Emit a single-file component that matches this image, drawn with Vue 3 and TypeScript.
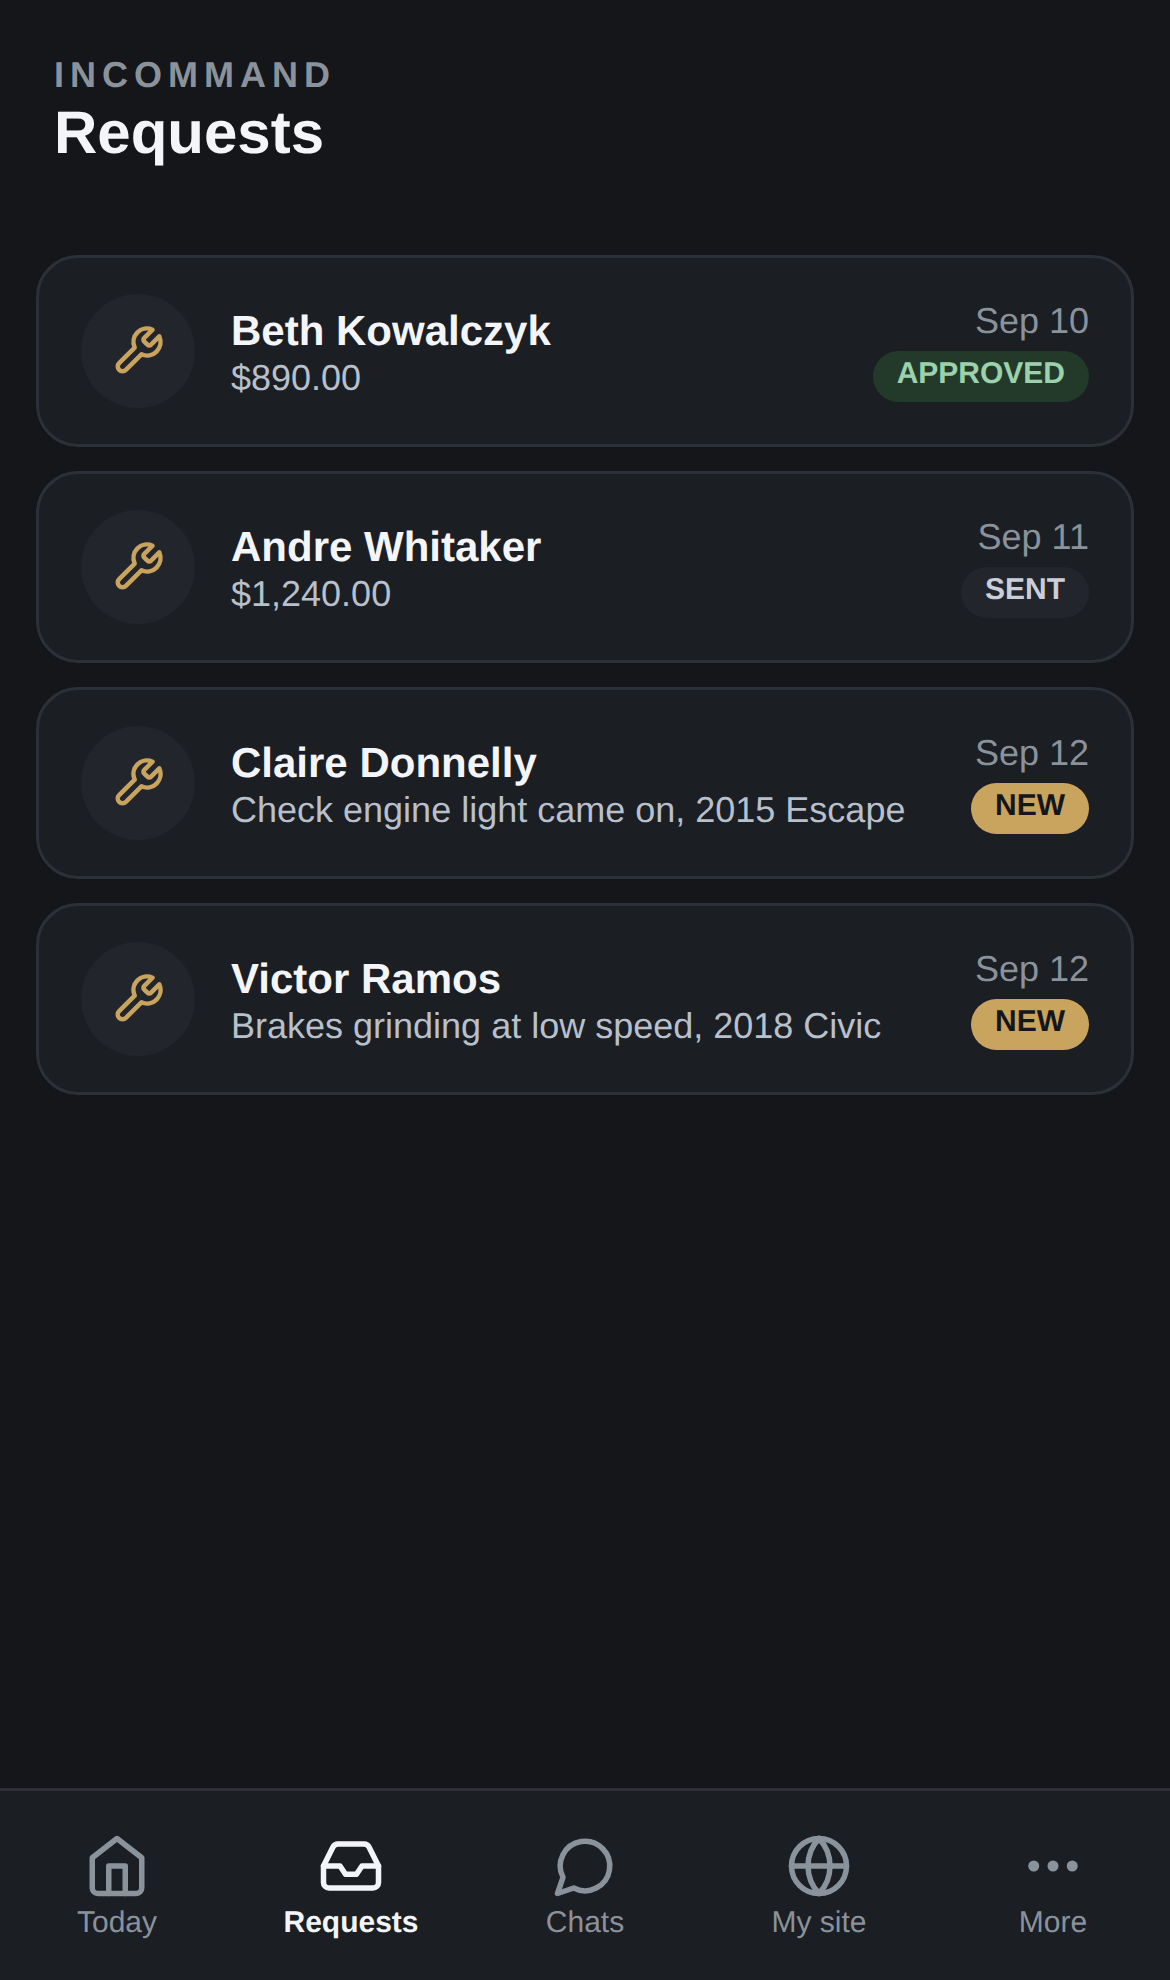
<script setup lang="ts">
interface Req { name: string; sub: string; date: string; status: string; kind: string }
const requests: Req[] = [
  { name: 'Beth Kowalczyk', sub: '$890.00', date: 'Sep 10', status: 'APPROVED', kind: 'approved' },
  { name: 'Andre Whitaker', sub: '$1,240.00', date: 'Sep 11', status: 'SENT', kind: 'sent' },
  { name: 'Claire Donnelly', sub: 'Check engine light came on, 2015 Escape', date: 'Sep 12', status: 'NEW', kind: 'new' },
  { name: 'Victor Ramos', sub: 'Brakes grinding at low speed, 2018 Civic', date: 'Sep 12', status: 'NEW', kind: 'new' },
]
</script>

<template>
  <div class="app">
    <header class="head">
      <div class="eyebrow">INCOMMAND</div>
      <h1 class="title">Requests</h1>
    </header>
    <main class="list">
      <article v-for="r in requests" :key="r.name" class="card">
        <div class="avatar">
          <svg class="wrench" viewBox="0 0 24 24" fill="none" stroke="currentColor" stroke-width="2" stroke-linecap="round" stroke-linejoin="round">
            <path d="M14.7 6.3a1 1 0 0 0 0 1.4l1.6 1.6a1 1 0 0 0 1.4 0l3.77-3.77a6 6 0 0 1-7.94 7.94l-6.91 6.91a2.12 2.12 0 0 1-3-3l6.91-6.91a6 6 0 0 1 7.94-7.94l-3.76 3.76z" />
          </svg>
        </div>
        <div class="body">
          <div class="name">{{ r.name }}</div>
          <div class="sub">{{ r.sub }}</div>
        </div>
        <div class="meta">
          <div class="date">{{ r.date }}</div>
          <span class="pill" :class="r.kind">{{ r.status }}</span>
        </div>
      </article>
    </main>
    <nav class="tabs">
      <div class="tab">
        <svg class="ico" viewBox="0 0 24 24" fill="none" stroke="currentColor" stroke-width="2" stroke-linecap="round" stroke-linejoin="round">
          <path d="m3 9 9-7 9 7v11a2 2 0 0 1-2 2H5a2 2 0 0 1-2-2z" />
          <path d="M9 22V12h6v10" />
        </svg>
        <span>Today</span>
      </div>
      <div class="tab active">
        <svg class="ico" viewBox="0 0 24 24" fill="none" stroke="currentColor" stroke-width="2" stroke-linecap="round" stroke-linejoin="round">
          <polyline points="22 12 16 12 14 15 10 15 8 12 2 12" />
          <path d="M5.45 5.11 2 12v6a2 2 0 0 0 2 2h16a2 2 0 0 0 2-2v-6l-3.45-6.89A2 2 0 0 0 16.76 4H7.24a2 2 0 0 0-1.79 1.11z" />
        </svg>
        <span>Requests</span>
      </div>
      <div class="tab">
        <svg class="ico" viewBox="0 0 24 24" fill="none" stroke="currentColor" stroke-width="2" stroke-linecap="round" stroke-linejoin="round">
          <path d="M7.9 20A9 9 0 1 0 4 16.1L2 22Z" />
        </svg>
        <span>Chats</span>
      </div>
      <div class="tab">
        <svg class="ico" viewBox="0 0 24 24" fill="none" stroke="currentColor" stroke-width="2" stroke-linecap="round" stroke-linejoin="round">
          <circle cx="12" cy="12" r="10" />
          <path d="M12 2a14.5 14.5 0 0 0 0 20 14.5 14.5 0 0 0 0-20" />
          <path d="M2 12h20" />
        </svg>
        <span>My site</span>
      </div>
      <div class="tab">
        <svg class="ico" viewBox="0 0 24 24" fill="none" stroke="currentColor" stroke-width="2" stroke-linecap="round" stroke-linejoin="round">
          <circle cx="12" cy="12" r="1" />
          <circle cx="19" cy="12" r="1" />
          <circle cx="5" cy="12" r="1" />
        </svg>
        <span>More</span>
      </div>
    </nav>
  </div>
</template>

<style scoped>
.app {
  width: 1170px;
  height: 1980px;
  display: flex;
  flex-direction: column;
  background: #14161a;
  font-family: "Liberation Sans", Arial, sans-serif;
  color: #f3f5f8;
  text-rendering: geometricPrecision;
}
.head {
  padding: 54px 54px 0;
  height: 255px;
  box-sizing: border-box;
}
.eyebrow {
  font-size: 36px;
  font-weight: 700;
  letter-spacing: 6px;
  color: #8a929c;
  line-height: 42px;
}
.title {
  margin: 0;
  font-size: 60px;
  font-weight: 700;
  line-height: 72px;
  color: #f3f5f8;
  padding-top: 1px;
}
.list {
  flex: 1;
  display: flex;
  flex-direction: column;
  gap: 24px;
  padding: 0 36px;
}
.card {
  display: flex;
  align-items: center;
  gap: 36px;
  padding: 36px 42px;
  background: #1b1e23;
  border: 3px solid #2c3038;
  border-radius: 42px;
}
.avatar {
  flex: none;
  width: 114px;
  height: 114px;
  border-radius: 50%;
  background: #22252b;
  color: #c9a45f;
  display: flex;
  align-items: center;
  justify-content: center;
}
.wrench {
  width: 54px;
  height: 54px;
}
.body {
  flex: 1;
  min-width: 0;
  padding-top: 4px;
}
.name {
  font-size: 42px;
  font-weight: 700;
  color: #f3f5f8;
  line-height: 48px;
}
.sub {
  font-size: 36px;
  color: #b8c0cc;
  line-height: 42px;
  margin-top: 2px;
}
.meta {
  flex: none;
  display: flex;
  flex-direction: column;
  align-items: flex-end;
  gap: 9px;
}
.date {
  font-size: 36px;
  color: #8a929c;
  line-height: 42px;
}
.pill {
  font-size: 30px;
  font-weight: 700;
  line-height: 34px;
  padding: 6px 24px 11px;
  border-radius: 999px;
}
.pill.approved {
  background: #233a2b;
  color: #9bd2ab;
}
.pill.sent {
  background: #22252b;
  color: #c9ced8;
}
.pill.new {
  background: #c9a45f;
  color: #14161a;
}
.tabs {
  flex: none;
  height: 192px;
  box-sizing: border-box;
  display: grid;
  grid-template-columns: repeat(5, 1fr);
  padding-top: 42px;
  background: #1b1e23;
  border-top: 3px solid #2c3038;
}
.tab {
  display: flex;
  flex-direction: column;
  align-items: center;
  gap: 6px;
  font-size: 30px;
  line-height: 35px;
  color: #8a929c;
}
.tab.active {
  color: #f3f5f8;
  font-weight: 700;
}
.ico {
  width: 66px;
  height: 66px;
}
</style>
